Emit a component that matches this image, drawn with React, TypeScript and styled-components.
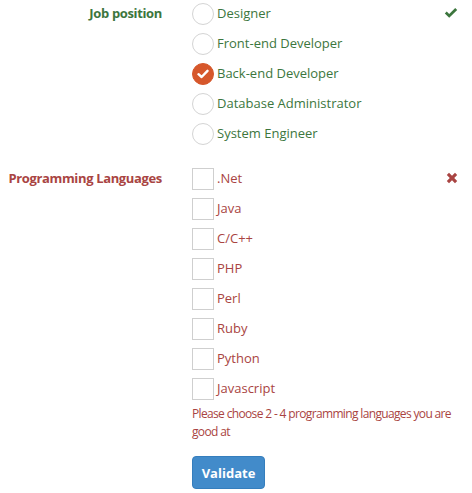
import React, { useState } from 'react';
import styled, { createGlobalStyle } from 'styled-components';

const GlobalStyle = createGlobalStyle`
  body {
    margin: 0;
    background: #fff;
    font-family: 'Open Sans', 'Liberation Sans', sans-serif;
  }
`;

const POSITIONS = [
  'Designer',
  'Front-end Developer',
  'Back-end Developer',
  'Database Administrator',
  'System Engineer',
];

const LANGUAGES = ['.Net', 'Java', 'C/C++', 'PHP', 'Perl', 'Ruby', 'Python', 'Javascript'];

const COLOR = {
  success: '#3c763d',
  error: '#a94442',
};

type Status = 'success' | 'error';

const App = () => {
  const [position, setPosition] = useState('Back-end Developer');
  const [languages, setLanguages] = useState<string[]>([]);

  const toggleLanguage = (lang: string) => {
    setLanguages((prev) =>
      prev.includes(lang) ? prev.filter((l) => l !== lang) : [...prev, lang]
    );
  };

  return (
    <Form onSubmit={(e) => e.preventDefault()}>
      <GlobalStyle />
      <FormGroup>
        <Label status="success">Job position</Label>
        <Controls>
          {POSITIONS.map((item) => (
            <Option key={item} status="success" onClick={() => setPosition(item)}>
              <Radio checked={position === item}>
                {position === item && (
                  <svg width="12" height="10" viewBox="0 0 12 10">
                    <path d="M1.5 5.2 L4.6 8 L10.5 1.8" fill="none" stroke="#fff" strokeWidth="2.4" strokeLinecap="round" strokeLinejoin="round" />
                  </svg>
                )}
              </Radio>
              <OptionText>{item}</OptionText>
            </Option>
          ))}
          <FeedbackIcon>
            <svg width="14" height="12" viewBox="0 0 14 12">
              <path d="M0.8 6.4 L2.7 4.5 L5.2 7 L11.2 1 L13.2 2.9 L5.2 10.8 Z" fill={COLOR.success} />
            </svg>
          </FeedbackIcon>
        </Controls>
      </FormGroup>

      <FormGroup>
        <Label status="error">Programming Languages</Label>
        <Controls>
          {LANGUAGES.map((item) => (
            <Option key={item} status="error" onClick={() => toggleLanguage(item)}>
              <Checkbox checked={languages.includes(item)} />
              <OptionText>{item}</OptionText>
            </Option>
          ))}
          <HelpText>Please choose 2 - 4 programming languages you are good at</HelpText>
          <FeedbackIcon>
            <svg width="12" height="12" viewBox="0 0 12 12">
              <path d="M0.8 3 L3 0.8 L6 3.8 L9 0.8 L11.2 3 L8.2 6 L11.2 9 L9 11.2 L6 8.2 L3 11.2 L0.8 9 L3.8 6 Z" fill={COLOR.error} />
            </svg>
          </FeedbackIcon>
          <ValidateButton type="submit">Validate</ValidateButton>
        </Controls>
      </FormGroup>
    </Form>
  );
};

export default App;

const Form = styled.form`
  display: flex;
  flex-direction: column;
  gap: 17px;
  width: 472px;
`;

const FormGroup = styled.div`
  display: grid;
  grid-template-columns: 162px 1fr;
  column-gap: 30px;
  padding-right: 14px;
`;

const Label = styled.label<{ status: Status }>`
  text-align: right;
  height: 28px;
  line-height: 26px;
  font-size: 13px;
  font-weight: bold;
  letter-spacing: -0.35px;
  color: ${({ status }) => COLOR[status]};
`;

const Controls = styled.div`
  position: relative;
  display: flex;
  flex-direction: column;
  align-items: flex-start;
  gap: 2px;
`;

const Option = styled.div<{ status: Status }>`
  display: flex;
  align-items: center;
  gap: 3px;
  height: 28px;
  font-size: 13px;
  color: ${({ status }) => COLOR[status]};
  cursor: pointer;
`;

const OptionText = styled.span`
  margin-bottom: 3px;
`;

const Radio = styled.span<{ checked: boolean }>`
  box-sizing: border-box;
  display: flex;
  align-items: center;
  justify-content: center;
  width: 22px;
  height: 22px;
  border-radius: 50%;
  border: 1px solid ${({ checked }) => (checked ? '#d6572b' : '#d4d4d4')};
  background: ${({ checked }) => (checked ? '#d6572b' : '#fff')};
`;

const Checkbox = styled.span<{ checked: boolean }>`
  box-sizing: border-box;
  width: 22px;
  height: 22px;
  border: 1px solid #cfcfcf;
  background: ${({ checked }) => (checked ? '#a94442' : '#fff')};
`;

const FeedbackIcon = styled.span`
  position: absolute;
  top: 7px;
  right: 0;
  display: flex;
`;

const HelpText = styled.p`
  margin: 0;
  font-size: 12px;
  line-height: 18px;
  letter-spacing: -0.65px;
  color: ${COLOR.error};
`;

const ValidateButton = styled.button`
  margin-top: 13px;
  width: 73px;
  height: 33px;
  border: 1px solid #357ebd;
  border-radius: 4px;
  background: #428bca;
  color: #fff;
  font-family: 'Open Sans', 'Liberation Sans', sans-serif;
  font-size: 13px;
  font-weight: bold;
  cursor: pointer;
`;
